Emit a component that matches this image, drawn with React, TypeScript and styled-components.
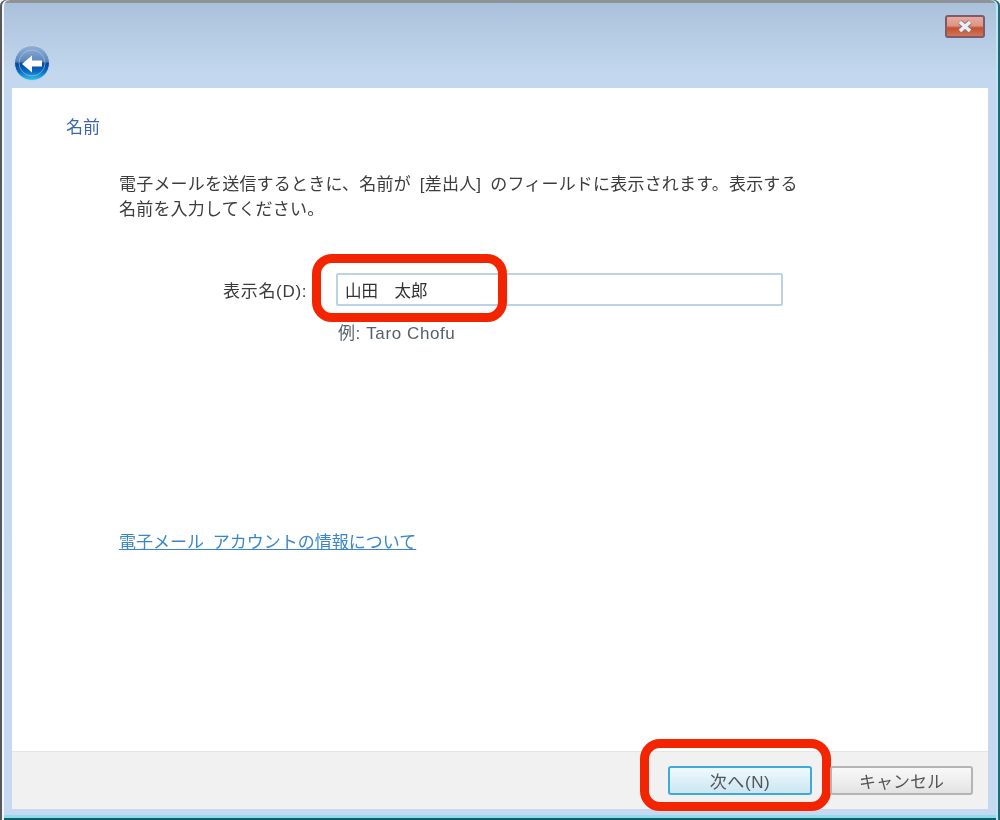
import React from 'react';
import styled, { createGlobalStyle } from 'styled-components';

const GlobalStyle = createGlobalStyle`
  html, body {
    margin: 0;
    padding: 0;
    background: #fff;
  }
`;

const Win = styled.div`
  width: 1000px;
  height: 820px;
  box-sizing: border-box;
  display: flex;
  flex-direction: column;
  padding: 4px 12px 11px 12px;
  border-radius: 6px 6px 0 0;
  background: linear-gradient(180deg, #a9c0da 0%, #c3d8ee 9%, #c6d9f0 100%);
  box-shadow:
    inset 2px 0 0 #55585c,
    inset 4px 0 0 #f4f7fb,
    inset -2px 0 0 #1d6a78,
    inset -4px 0 0 #bfe6ef,
    inset 0 -2px 0 #0f5f6a,
    inset 0 -5px 0 #8fdcec,
    inset 0 3px 0 #8f9297;
  font-family: "Liberation Sans", "Noto Sans CJK JP", sans-serif;
  filter: blur(0.6px);
`;

const Caption = styled.div`
  height: 84px;
  flex: none;
  display: flex;
  flex-direction: column;
  padding-top: 11px;
  box-sizing: border-box;
`;

const CloseButton = styled.div`
  align-self: flex-end;
  width: 40px;
  height: 23px;
  margin-right: 3px;
  box-sizing: border-box;
  display: flex;
  align-items: center;
  justify-content: center;
  border: 2px solid #7d5a6c;
  border-radius: 3px;
  background: linear-gradient(180deg, #eaaa9c 0%, #dc9686 45%, #c4502f 58%, #cf7558 100%);
`;

const BackButton = styled.div`
  width: 36px;
  height: 36px;
  margin: 7px 0 0 2px;
`;

const Body = styled.div`
  flex: 1;
  display: flex;
  flex-direction: column;
  background: #fff;
  min-height: 0;
`;

const Content = styled.div`
  flex: 1;
  display: flex;
  flex-direction: column;
  padding: 28px 0 0 54px;
`;

const Heading = styled.div`
  font-size: 17px;
  line-height: 24px;
  color: #3d66a8;
`;

const Intro = styled.p`
  margin: 32px 0 0 53px;
  width: 700px;
  font-size: 17px;
  line-height: 25px;
  letter-spacing: 0.2px;
  word-spacing: 4px;
  color: #3c3c3c;
`;

const FieldRow = styled.div`
  display: flex;
  align-items: center;
  margin: 51px 0 0 157px;
`;

const FieldLabel = styled.label`
  font-size: 17px;
  letter-spacing: 0.7px;
  color: #3c3c3c;
  width: 113px;
`;

const FieldBox = styled.div`
  position: relative;
  width: 447px;
  height: 33px;
  box-sizing: border-box;
  padding-left: 7px;
  display: flex;
  align-items: center;
  border: 2px solid #bcd3e6;
  border-radius: 2px;
  font-size: 16.5px;
  color: #333;
  white-space: pre;
`;

const Ring = styled.div<{ $w: number; $h: number; $l: number; $t: number }>`
  position: absolute;
  left: ${p => p.$l}px;
  top: ${p => p.$t}px;
  width: ${p => p.$w}px;
  height: ${p => p.$h}px;
  box-sizing: border-box;
  border: 9px solid #f32400;
  border-radius: 20px;
`;

const Example = styled.div`
  margin: 16px 0 0 272px;
  font-size: 17px;
  line-height: 24px;
  letter-spacing: 0.6px;
  color: #55606a;
`;

const HelpLink = styled.a`
  margin: 185px 0 0 53px;
  align-self: flex-start;
  font-size: 17px;
  line-height: 24px;
  word-spacing: 4px;
  color: #3a86cc;
  text-decoration: underline;
`;

const Footer = styled.div`
  flex: none;
  height: 58px;
  box-sizing: border-box;
  display: flex;
  justify-content: flex-end;
  gap: 18px;
  padding: 14px 15px 0 0;
  background: #f1f1f1;
  border-top: 1px solid #e6e6e6;
`;

const Button = styled.div<{ $primary?: boolean }>`
  position: relative;
  width: ${p => (p.$primary ? 144 : 143)}px;
  height: 29px;
  box-sizing: border-box;
  padding-bottom: 1px;
  display: flex;
  align-items: center;
  justify-content: center;
  font-size: 17px;
  letter-spacing: ${p => (p.$primary ? 0.6 : 0)}px;
  color: #555;
  border-radius: 3px;
  border: 2px solid ${p => (p.$primary ? '#3fa9dc' : '#b4b4b4')};
  background: ${p =>
    p.$primary
      ? 'linear-gradient(180deg, #eff9fc 0%, #dcf0f8 50%, #cce6f2 100%)'
      : 'linear-gradient(180deg, #f8f8f8 0%, #efefef 50%, #e2e2e2 100%)'};
`;

const CloseGlyph = () => (
  <svg width="16" height="13" viewBox="0 0 16 13">
    <path d="M3 2 13 11M13 2 3 11" fill="none" stroke="#8a7a80" strokeWidth="5.5" />
    <path d="M3 2 13 11M13 2 3 11" fill="none" stroke="#eceef2" strokeWidth="3.5" />
  </svg>
);

const BackGlyph = () => (
  <svg width="36" height="36" viewBox="0 0 36 36">
    <defs>
      <linearGradient id="orb" x1="0" y1="0" x2="0" y2="1">
        <stop offset="0" stopColor="#8fb2d8" />
        <stop offset="0.45" stopColor="#5d87bd" />
        <stop offset="0.52" stopColor="#04459f" />
        <stop offset="0.75" stopColor="#0a6fc4" />
        <stop offset="1" stopColor="#35c4ee" />
      </linearGradient>
    </defs>
    <circle cx="18" cy="18" r="17.5" fill="url(#orb)" stroke="#c6d4e6" strokeWidth="1" />
    <circle cx="18" cy="18" r="13" fill="none" stroke="#c4d6ea" strokeWidth="1" opacity="0.5" />
    <path d="M8 19 18 10.5v5H28v6H18v6z" fill="#fff" />
  </svg>
);

export default function App() {
  return (
    <>
      <GlobalStyle />
      <Win>
        <Caption>
          <CloseButton>
            <CloseGlyph />
          </CloseButton>
          <BackButton>
            <BackGlyph />
          </BackButton>
        </Caption>
        <Body>
          <Content>
            <Heading>名前</Heading>
            <Intro>
              電子メールを送信するときに、名前が [差出人] のフィールドに表示されます。表示する
              <br />
              名前を入力してください。
            </Intro>
            <FieldRow>
              <FieldLabel>表示名(D):</FieldLabel>
              <FieldBox>
                山田　太郎
                <Ring $l={-26} $t={-21} $w={195} $h={68} />
              </FieldBox>
            </FieldRow>
            <Example>例: Taro Chofu</Example>
            <HelpLink>電子メール アカウントの情報について</HelpLink>
          </Content>
          <Footer>
            <Button $primary>
              次へ(N)
              <Ring $l={-30} $t={-29} $w={191} $h={72} />
            </Button>
            <Button>キャンセル</Button>
          </Footer>
        </Body>
      </Win>
    </>
  );
}
